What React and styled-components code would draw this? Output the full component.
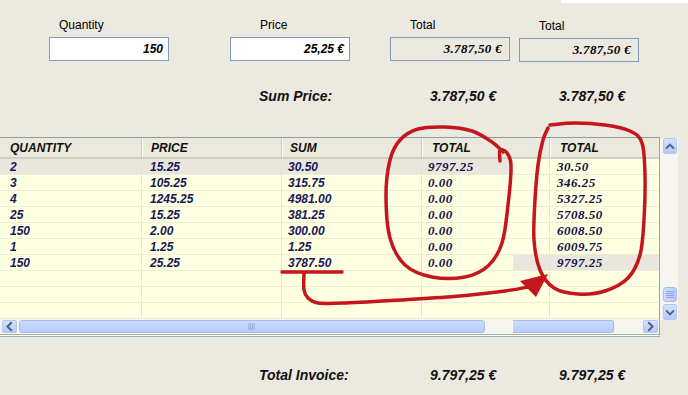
import React from 'react';
import styled, { createGlobalStyle } from 'styled-components';

const GlobalStyle = createGlobalStyle`
  html, body {
    margin: 0;
    padding: 0;
  }
  body {
    background: #ece9e0;
    font-family: "Liberation Sans", Arial, sans-serif;
    overflow: hidden;
  }
`;

const Page = styled.div`
  position: relative;
  width: 688px;
  height: 395px;
  background: #ece9e0;
  overflow: hidden;
`;

const TopStrip = styled.div`
  height: 3px;
  margin-left: 561px;
  background: #fff;
`;

const FieldsRow = styled.div`
  display: flex;
  align-items: flex-start;
  padding: 15px 0 0 49px;
`;

const Field = styled.div`
  display: flex;
  flex-direction: column;
  gap: 5px;
  width: 120px;
  margin-left: ${p => p.$offset}px;
  margin-top: ${p => p.$drop || 0}px;
`;

const Label = styled.span`
  height: 14px;
  line-height: 14px;
  font-size: 12px;
  color: #000;
  padding-left: ${p => p.$indent}px;
`;

const Input = styled.div`
  box-sizing: border-box;
  height: 24px;
  display: flex;
  align-items: center;
  justify-content: flex-end;
  border: 1px solid #7f9db9;
  background: ${p => (p.$readOnly ? 'transparent' : '#fff')};
  padding-right: ${p => (p.$readOnly ? 7 : 5)}px;
  font-family: ${p => (p.$readOnly ? '"Liberation Serif", "Times New Roman", serif' : '"Liberation Sans", Arial, sans-serif')};
  font-size: ${p => (p.$readOnly ? 13 : 12)}px;
  letter-spacing: ${p => (p.$readOnly ? 0.3 : 0)}px;
  font-weight: bold;
  font-style: italic;
  color: #000;
`;

const Summary = styled.div`
  display: grid;
  grid-template-columns: 171px 129px auto;
  padding-left: 259px;
  margin-top: ${p => p.$top}px;
  font-size: 14px;
  line-height: 16px;
  font-weight: bold;
  font-style: italic;
  color: #111;
`;

const TableArea = styled.div`
  display: flex;
  height: 200px;
  margin-top: 33px;
`;

const Grid = styled.div`
  box-sizing: border-box;
  width: ${p => p.$width}px;
  display: flex;
  flex-direction: column;
  border-top: 1px solid #8e9ba6;
  border-bottom: 3px double #9fb0be;
  border-right: ${p => (p.$edge ? '1px solid #98a5b1' : 'none')};
  background: #ffffe1;
`;

const HeaderRow = styled.div`
  box-sizing: border-box;
  display: grid;
  grid-template-columns: ${p => p.$cols};
  height: 21px;
  background: #ebe9dc;
  border-bottom: 2px solid #d3cfc0;
`;

const HeaderCell = styled.div`
  display: flex;
  align-items: center;
  padding-left: ${p => p.$pad || 0}px;
  font-size: 12px;
  font-weight: bold;
  font-style: italic;
  color: #111;
  &:not(:first-child) {
    border-left: 1px solid #d0ccbd;
    box-shadow: inset 1px 0 #fbfaf5;
  }
`;

const BodyRow = styled.div`
  box-sizing: border-box;
  display: grid;
  grid-template-columns: ${p => p.$cols};
  height: 16px;
  border-bottom: 1px solid #eeecd3;
  background: ${p => (p.$selected ? '#e9e6dd' : '#ffffe1')};
`;

const Cell = styled.div`
  display: flex;
  align-items: center;
  padding-left: ${p => p.$pad || 0}px;
  font-family: ${p => (p.$serif ? '"Liberation Serif", "Times New Roman", serif' : '"Liberation Sans", Arial, sans-serif')};
  font-size: ${p => (p.$serif ? 13 : 12)}px;
  letter-spacing: ${p => (p.$serif ? 0.5 : 0)}px;
  font-weight: bold;
  font-style: italic;
  color: ${p => (p.$serif ? '#101048' : '#18185a')};
  white-space: nowrap;
  &:not(:first-child) {
    border-left: 1px solid #e7e5cd;
  }
`;

const HScroll = styled.div`
  display: flex;
  align-items: center;
  height: 15px;
  background: #f6f5ef;
`;

const ScrollButton = styled.div`
  box-sizing: border-box;
  flex: none;
  width: ${p => (p.$vertical ? 14 : 15)}px;
  height: ${p => (p.$vertical ? 16 : 13)}px;
  margin: ${p => p.$margin || 0};
  display: flex;
  align-items: center;
  justify-content: center;
  border: 1px solid #b4c7f0;
  border-radius: 2px;
  background: linear-gradient(#d6e2fd, #b5c8f5);
`;

const Thumb = styled.div`
  box-sizing: border-box;
  flex: none;
  display: flex;
  align-items: center;
  justify-content: center;
  width: ${p => (p.$vertical ? '14px' : `${p.$size}px`)};
  height: ${p => (p.$vertical ? `${p.$size}px` : '13px')};
  margin-left: ${p => p.$left || 0}px;
  border: 1px solid #a8bdee;
  border-left: ${p => (p.$cut ? 'none' : '1px solid #a8bdee')};
  border-radius: ${p => (p.$cut ? '0 3px 3px 0' : '3px')};
  background: ${p => (p.$vertical ? 'linear-gradient(to right, #ccdafd, #b9ccf8)' : 'linear-gradient(#ccdafd, #b9ccf8)')};
`;

const Spacer = styled.div`
  flex: 1;
`;

const VScrollCol = styled.div`
  display: flex;
  flex-direction: column;
  width: 18px;
`;

const VTrack = styled.div`
  display: flex;
  flex-direction: column;
  height: 182px;
  margin-top: 1px;
  padding: 0 1px 0 3px;
  background: #f6f5ef;
`;

const VGap = styled.div`
  flex: 1;
  display: flex;
  flex-direction: column;
  justify-content: flex-end;
  padding-bottom: 2px;
`;

const Corner = styled.div`
  height: 17px;
  background: #ebe8dd;
`;

const Overlay = styled.svg`
  position: absolute;
  top: 0;
  left: 0;
  pointer-events: none;
`;

const Chevron = ({ dir }) => {
  const pts = {
    up: '3,8 6.5,4.5 10,8',
    down: '3,5 6.5,8.5 10,5',
    left: '8,3 4.5,6.5 8,10',
    right: '5,3 8.5,6.5 5,10',
  }[dir];
  return (
    <svg width="13" height="13" viewBox="0 0 13 13">
      <polyline points={pts} fill="none" stroke="#4d6185" strokeWidth="2" strokeLinecap="square" />
    </svg>
  );
};

const Grip = ({ vertical }) => (
  <svg width="8" height={vertical ? 8 : 7} viewBox="0 0 8 8">
    {[0, 2, 4, 6].map(i =>
      vertical ? (
        <line key={i} x1="0" x2="8" y1={i + 0.5} y2={i + 0.5} stroke="#8fa6dc" strokeWidth="1" />
      ) : (
        <line key={i} x1={i + 0.5} x2={i + 0.5} y1="0" y2="8" stroke="#8fa6dc" strokeWidth="1" />
      )
    )}
  </svg>
);

function smooth(pts) {
  let d = `M${pts[0][0]} ${pts[0][1]}`;
  for (let i = 0; i < pts.length - 1; i++) {
    const p0 = pts[i - 1] || pts[i];
    const p1 = pts[i];
    const p2 = pts[i + 1];
    const p3 = pts[i + 2] || p2;
    const c1 = [p1[0] + (p2[0] - p0[0]) / 6, p1[1] + (p2[1] - p0[1]) / 6];
    const c2 = [p2[0] - (p3[0] - p1[0]) / 6, p2[1] - (p3[1] - p1[1]) / 6];
    d += ` C${c1[0].toFixed(1)} ${c1[1].toFixed(1)} ${c2[0].toFixed(1)} ${c2[1].toFixed(1)} ${p2[0]} ${p2[1]}`;
  }
  return d;
}

const loopLeft = [
  [500, 161], [500, 150], [507, 153], [511, 166], [508, 205], [502, 243], [488, 266],
  [465, 277], [432, 277], [405, 265], [390, 238], [386, 195], [390, 160], [400, 140],
  [418, 129], [445, 127], [472, 131], [492, 142], [503, 152],
];

const loopRight = [
  [550, 125], [575, 123], [605, 125], [630, 131], [642, 143], [645, 175], [644, 220],
  [640, 255], [628, 278], [605, 291], [578, 294], [554, 288], [540, 270], [534, 240],
  [535, 200], [538, 165], [543, 140], [548, 128],
];

const arrowLine = [
  [304, 273], [304, 290], [308, 298], [318, 303], [345, 303], [400, 300], [460, 296],
  [505, 291], [528, 287],
];

const leftCols = [
  { w: 141, hp: 10, dp: 10, title: 'QUANTITY' },
  { w: 140, hp: 9, dp: 8, title: 'PRICE' },
  { w: 140, hp: 8, dp: 6, title: 'SUM' },
  { w: 92, hp: 10, dp: 6, title: 'TOTAL', serif: true },
];

const rightCols = [
  { w: 36, hp: 0, dp: 0, title: '' },
  { w: 110, hp: 10, dp: 7, title: 'TOTAL', serif: true },
];

const leftRows = [
  ['2', '15.25', '30.50', '9797.25'],
  ['3', '105.25', '315.75', '0.00'],
  ['4', '1245.25', '4981.00', '0.00'],
  ['25', '15.25', '381.25', '0.00'],
  ['150', '2.00', '300.00', '0.00'],
  ['1', '1.25', '1.25', '0.00'],
  ['150', '25.25', '3787.50', '0.00'],
];

const rightRows = ['30.50', '346.25', '5327.25', '5708.50', '6008.50', '6009.75', '9797.25'].map(v => ['', v]);

const ROW_COUNT = 10;

function DataGrid({ cols, rows, selected, edge, children }) {
  const template = cols.map(c => `${c.w}px`).join(' ');
  const width = cols.reduce((s, c) => s + c.w, 0) + (edge ? 1 : 0);
  const filled = [...rows];
  while (filled.length < ROW_COUNT) filled.push(cols.map(() => ''));
  return (
    <Grid $width={width} $edge={edge}>
      <HeaderRow $cols={template}>
        {cols.map((c, i) => (
          <HeaderCell key={i} $pad={c.hp}>{c.title}</HeaderCell>
        ))}
      </HeaderRow>
      {filled.map((r, ri) => (
        <BodyRow key={ri} $cols={template} $selected={ri === selected}>
          {r.map((v, ci) => (
            <Cell key={ci} $pad={cols[ci].dp} $serif={cols[ci].serif}>{v}</Cell>
          ))}
        </BodyRow>
      ))}
      {children}
    </Grid>
  );
}

export default function App() {
  return (
    <Page>
      <GlobalStyle />
      <TopStrip />
      <FieldsRow>
        <Field $offset={0}>
          <Label $indent={10}>Quantity</Label>
          <Input>150</Input>
        </Field>
        <Field $offset={61}>
          <Label $indent={30}>Price</Label>
          <Input>25,25 €</Input>
        </Field>
        <Field $offset={40}>
          <Label $indent={20}>Total</Label>
          <Input $readOnly>3.787,50 €</Input>
        </Field>
        <Field $offset={9} $drop={1}>
          <Label $indent={20}>Total</Label>
          <Input $readOnly>3.787,50 €</Input>
        </Field>
      </FieldsRow>

      <Summary $top={26}>
        <span>Sum Price:</span>
        <span>3.787,50 €</span>
        <span>3.787,50 €</span>
      </Summary>

      <TableArea>
        <DataGrid cols={leftCols} rows={leftRows} selected={0}>
          <HScroll>
            <ScrollButton $margin="0 0 0 2px"><Chevron dir="left" /></ScrollButton>
            <Thumb $size={466} $left={2}><Grip /></Thumb>
            <Spacer />
          </HScroll>
        </DataGrid>
        <DataGrid cols={rightCols} rows={rightRows} selected={6} edge>
          <HScroll>
            <Thumb $size={101} $cut />
            <Spacer />
            <ScrollButton $margin="0 1px 0 0"><Chevron dir="right" /></ScrollButton>
          </HScroll>
        </DataGrid>
        <VScrollCol>
          <VTrack>
            <ScrollButton $vertical><Chevron dir="up" /></ScrollButton>
            <VGap>
              <Thumb $vertical $size={15}><Grip vertical /></Thumb>
            </VGap>
            <ScrollButton $vertical><Chevron dir="down" /></ScrollButton>
          </VTrack>
          <Corner />
        </VScrollCol>
      </TableArea>

      <Summary $top={30}>
        <span>Total Invoice:</span>
        <span>9.797,25 €</span>
        <span>9.797,25 €</span>
      </Summary>

      <Overlay width="688" height="395" viewBox="0 0 688 395">
        <g fill="none" stroke="#c4161c" strokeWidth="3.5" strokeLinecap="round" strokeLinejoin="round">
          <path d={smooth(loopLeft)} />
          <path d={smooth(loopRight)} />
          <path d="M282 272 L342 272" />
          <path d={smooth(arrowLine)} />
        </g>
        <polygon points="520,281 548,274 536,297" fill="#c4161c" />
      </Overlay>
    </Page>
  );
}
